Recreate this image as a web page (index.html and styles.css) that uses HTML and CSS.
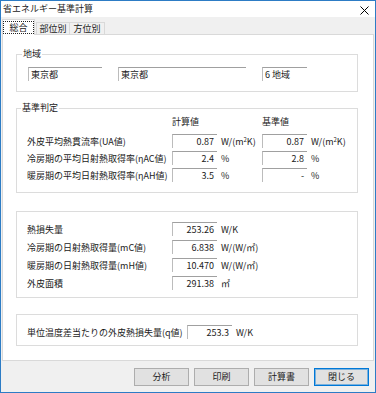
FILE: index.html
```html
<!DOCTYPE html>
<html lang="ja">
<head>
    <meta charset="UTF-8">
    <meta name="viewport" content="width=device-width, initial-scale=1.0">
    <title>省エネルギー基準計算</title>
    <link rel="stylesheet" href="styles.css">
</head>
<body>

    <div class="window">
        <div class="titlebar">
            <span class="title">省エネルギー基準計算</span>
            <svg class="close" viewBox="0 0 9 9">
                <path d="M0.5 0.5 L8.5 8.5 M8.5 0.5 L0.5 8.5" stroke="#000" stroke-width="1" fill="none"/>
            </svg>
        </div>

        <div class="tabs">
            <div class="tab tab-active"><span class="focus">総合</span></div>
            <div class="tab tab-bui">部位別</div>
            <div class="tab tab-hoi">方位別</div>
        </div>

        <div class="panel">
            <div class="group region">
                <div class="legend">地域</div>
                <div class="region-row">
                    <div class="field f-pref">東京都</div>
                    <div class="field f-city">東京都</div>
                    <div class="field f-zone">6 地域</div>
                </div>
            </div>

            <div class="group judge">
                <div class="legend">基準判定</div>
                <div class="row head">
                    <span></span>
                    <span class="col-head">計算値</span>
                    <span></span>
                    <span class="col-head">基準値</span>
                </div>
                <div class="row">
                    <span>外皮平均熱貫流率(UA値)</span>
                    <div class="field value">0.87</div>
                    <span class="unit">W/(m<sup>2</sup>K)</span>
                    <div class="field value">0.87</div>
                    <span class="unit">W/(m<sup>2</sup>K)</span>
                </div>
                <div class="row">
                    <span>冷房期の平均日射熱取得率(ηAC値)</span>
                    <div class="field value">2.4</div>
                    <span class="unit">%</span>
                    <div class="field value">2.8</div>
                    <span class="unit">%</span>
                </div>
                <div class="row">
                    <span>暖房期の平均日射熱取得率(ηAH値)</span>
                    <div class="field value">3.5</div>
                    <span class="unit">%</span>
                    <div class="field value">-</div>
                    <span class="unit">%</span>
                </div>
            </div>

            <div class="group loss">
                <div class="row">
                    <span>熱損失量</span>
                    <div class="field value">253.26</div>
                    <span class="unit">W/K</span>
                </div>
                <div class="row">
                    <span>冷房期の日射熱取得量(mC値)</span>
                    <div class="field value">6.838</div>
                    <span class="unit">W/(W/㎡)</span>
                </div>
                <div class="row">
                    <span>暖房期の日射熱取得量(mH値)</span>
                    <div class="field value">10.470</div>
                    <span class="unit">W/(W/㎡)</span>
                </div>
                <div class="row">
                    <span>外皮面積</span>
                    <div class="field value">291.38</div>
                    <span class="unit">㎡</span>
                </div>
            </div>

            <div class="group qvalue">
                <div class="row row-q">
                    <span>単位温度差当たりの外皮熱損失量(q値)</span>
                    <div class="field value">253.3</div>
                    <span class="unit">W/K</span>
                </div>
            </div>
        </div>

        <div class="actions">
            <button class="btn">分析</button>
            <button class="btn">印刷</button>
            <button class="btn">計算書</button>
            <button class="btn btn-default">閉じる</button>
        </div>
    </div>

</body>
</html>
```

FILE: styles.css
```css
body {
    margin: 0;
    font-family: "Noto Sans CJK JP", "Noto Sans", sans-serif;
    font-size: 9px;
    color: #1a1a1a;
}

.window {
    width: 376px;
    height: 393px;
    box-sizing: border-box;
    border: 1px solid #2d7cc5;
    background: #f0f0f0;
    display: flex;
    flex-direction: column;
}

/* タイトルバー */
.titlebar {
    height: 16px;
    flex: none;
    background: #fff;
    display: flex;
    align-items: center;
    justify-content: space-between;
    padding-left: 2px;
}

.title {
    line-height: 16px;
}

.close {
    width: 9px;
    height: 9px;
    margin-right: 6px;
    margin-top: 2px;
}

/* タブ */
.tabs {
    height: 18px;
    flex: none;
    display: flex;
    align-items: flex-end;
    padding-left: 1px;
    margin-bottom: -1px;
    position: relative;
    z-index: 1;
}

.tab {
    box-sizing: border-box;
    height: 12px;
    margin-bottom: 1px;
    border: 1px solid #d9d9d9;
    border-bottom: none;
    display: flex;
    align-items: center;
    justify-content: center;
    line-height: 11px;
}

.tab-active {
    width: 33px;
    height: 16px;
    margin-bottom: 0;
    background: #fff;
    align-items: flex-start;
    padding-top: 1px;
}

.tab-bui {
    width: 34px;
    margin-left: 1px;
}

.tab-hoi {
    width: 36px;
    margin-left: -1px;
}

.focus {
    box-sizing: border-box;
    width: 31px;
    height: 13px;
    border: 1px dotted #222;
    display: flex;
    align-items: center;
    justify-content: center;
    line-height: 11px;
}

/* パネル */
.panel {
    box-sizing: border-box;
    height: 327px;
    flex: none;
    margin: 0 1px;
    padding-top: 19px;
    background: #fff;
    border: 1px solid #d9d9d9;
}

.group {
    border: 1px solid #dcdcdc;
    margin: 0 15px 0 13px;
    padding: 0 0 10px 10px;
}

.legend {
    width: max-content;
    margin: -7px 0 0 -6px;
    padding: 0 1px;
    background: #fff;
    line-height: 12px;
}

.region {
    padding-left: 11px;
}

.region-row {
    display: flex;
    gap: 16px;
    margin-top: 7px;
}

.field {
    box-sizing: border-box;
    height: 14px;
    border-top: 1px solid #a0a0a0;
    border-left: 1px solid #bcbcbc;
    padding-left: 2px;
    line-height: 13px;
    white-space: nowrap;
}

.f-pref { width: 74px; }
.f-city { width: 128px; }
.f-zone { width: 45px; }

.value {
    text-align: right;
    padding: 0 3px 0 0;
}

.row {
    display: grid;
    grid-template-columns: 145px 45px 45px 45px auto;
    align-items: center;
    height: 14px;
    line-height: 13px;
    white-space: nowrap;
}

.unit {
    padding-left: 4px;
}

.unit sup {
    font-size: 6px;
    line-height: 0;
    vertical-align: 3px;
}

.judge {
    margin-top: 16px;
}

.judge .head {
    margin-bottom: 6px;
}

.judge .row + .row {
    margin-top: 3px;
}

.loss {
    margin-top: 18px;
    padding-top: 10px;
    padding-bottom: 7px;
}

.loss .row + .row {
    margin-top: 4px;
}

.qvalue {
    margin-top: 16px;
    padding-top: 10px;
    padding-bottom: 6px;
}

.row-q {
    grid-template-columns: 160px 45px auto;
}

/* ボタン */
.actions {
    display: flex;
    justify-content: flex-end;
    gap: 5px;
    margin-top: 7px;
    padding-right: 6px;
}

.btn {
    width: 55px;
    height: 18px;
    padding: 0;
    background: #e1e1e1;
    border: 1px solid #adadad;
    font: inherit;
    line-height: 14px;
    color: #1a1a1a;
}

.btn-default {
    border-color: #0078d7;
    box-shadow: inset 0 0 0 1px rgba(0, 120, 215, 0.45);
}
```
